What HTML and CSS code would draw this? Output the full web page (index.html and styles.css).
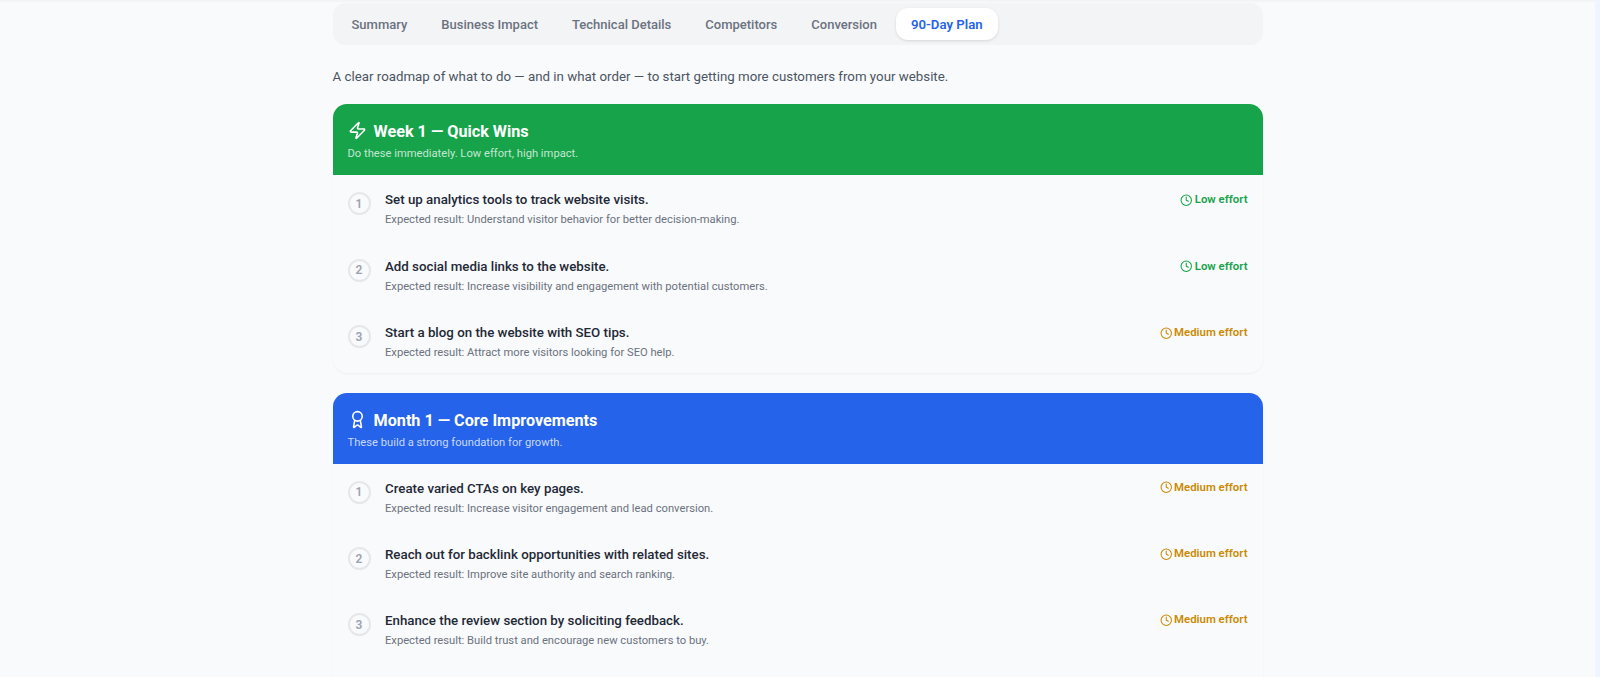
FILE: index.html
```html
<!DOCTYPE html>
<html lang="en">
<head>
<meta charset="utf-8">
<title>90-Day Plan</title>
<link rel="stylesheet" href="styles.css">
</head>
<body>
<svg class="defs" width="0" height="0" aria-hidden="true">
<symbol id="clock" viewBox="0 0 24 24"><circle cx="12" cy="12" r="10"/><path d="M12 6v6l4 2"/></symbol>
</svg>
<div class="page">
<main class="content">
<nav class="tabs">
<span class="tab">Summary</span>
<span class="tab">Business Impact</span>
<span class="tab">Technical Details</span>
<span class="tab">Competitors</span>
<span class="tab">Conversion</span>
<span class="tab active">90-Day Plan</span>
</nav>
<p class="intro">A clear roadmap of what to do — and in what order — to start getting more customers from your website.</p>

<section class="card">
<header class="head green">
<h2 class="head-title"><svg class="head-icon" viewBox="0 0 24 24"><path d="M4 14a1 1 0 0 1-.78-1.63l9.9-10.2a.5.5 0 0 1 .86.46l-1.92 6.02A1 1 0 0 0 13 10h7a1 1 0 0 1 .78 1.63l-9.9 10.2a.5.5 0 0 1-.86-.46l1.92-6.02A1 1 0 0 0 11 14z"/></svg>Week 1 — Quick Wins</h2>
<p class="head-sub">Do these immediately. Low effort, high impact.</p>
</header>
<ol class="items">
<li class="item"><span class="num">1</span><div class="body"><div class="title">Set up analytics tools to track website visits.</div><div class="result">Expected result: Understand visitor behavior for better decision-making.</div></div><span class="effort low"><svg class="clock"><use href="#clock"/></svg>Low effort</span></li>
<li class="item"><span class="num">2</span><div class="body"><div class="title">Add social media links to the website.</div><div class="result">Expected result: Increase visibility and engagement with potential customers.</div></div><span class="effort low"><svg class="clock"><use href="#clock"/></svg>Low effort</span></li>
<li class="item"><span class="num">3</span><div class="body"><div class="title">Start a blog on the website with SEO tips.</div><div class="result">Expected result: Attract more visitors looking for SEO help.</div></div><span class="effort med"><svg class="clock"><use href="#clock"/></svg>Medium effort</span></li>
</ol>
</section>

<section class="card card-open">
<header class="head blue">
<h2 class="head-title"><svg class="head-icon" viewBox="0 0 24 24"><path d="m15.477 12.89 1.515 8.526a.5.5 0 0 1-.81.47l-3.58-2.687a1 1 0 0 0-1.197 0l-3.586 2.686a.5.5 0 0 1-.81-.469l1.514-8.526"/><circle cx="12" cy="8" r="6"/></svg>Month 1 — Core Improvements</h2>
<p class="head-sub">These build a strong foundation for growth.</p>
</header>
<ol class="items">
<li class="item"><span class="num">1</span><div class="body"><div class="title">Create varied CTAs on key pages.</div><div class="result">Expected result: Increase visitor engagement and lead conversion.</div></div><span class="effort med"><svg class="clock"><use href="#clock"/></svg>Medium effort</span></li>
<li class="item"><span class="num">2</span><div class="body"><div class="title">Reach out for backlink opportunities with related sites.</div><div class="result">Expected result: Improve site authority and search ranking.</div></div><span class="effort med"><svg class="clock"><use href="#clock"/></svg>Medium effort</span></li>
<li class="item"><span class="num">3</span><div class="body"><div class="title">Enhance the review section by soliciting feedback.</div><div class="result">Expected result: Build trust and encourage new customers to buy.</div></div><span class="effort med"><svg class="clock"><use href="#clock"/></svg>Medium effort</span></li>
</ol>
</section>
</main>
<div class="rail"></div>
</div>
</body>
</html>
```
FILE: styles.css
```css
* { box-sizing: border-box; }
html, body { margin: 0; height: 677px; overflow: hidden; }
body { font-family: Roboto, "Noto Sans", sans-serif; background: #f9fafb; color: #111827; }
.defs { display: block; height: 0; }
.page { display: flex; height: 677px; overflow: hidden; }
.content { flex: 1; border-top: 2px solid #f3f4f6; padding: 1px 332.5px 0; min-width: 0; }
.rail { width: 5px; background: #eff6ff; }
.tabs { display: flex; gap: 4px; height: 42px; padding: 5px 4px; background: #f3f4f6; border-radius: 12px; }
.tab { display: flex; align-items: center; padding: 0 15px; font-size: 13px; font-weight: 500; color: #6b7280; border-radius: 12px; }
.tab.active { background: #fff; color: #2563eb; font-size: 13.2px; font-weight: 600; box-shadow: 0 1px 3px rgba(0,0,0,.12); }
.intro { margin: 22px 0 17px; font-size: 13.3px; line-height: 20px; color: #4b5563; }
.card { margin-bottom: 20px; border-radius: 14px; overflow: hidden; box-shadow: 0 1px 2px rgba(0,0,0,.05); background: #f9fafb; }
.card-open { padding-bottom: 60px; }
.card-open .item { padding-top: 14.5px; }
.card-open .item:nth-child(3) { padding-top: 14px; }
.card-open .effort { margin-top: 0; }
.head { height: 71px; padding: 16px 15px 0; color: #fff; }
.green { background: #16a34a; }
.blue { background: #2563eb; }
.head-title { display: flex; align-items: center; gap: 7px; margin: 0; font-size: 16.2px; line-height: 24px; font-weight: 700; }
.head-icon { width: 19px; height: 19px; margin-top: -3px; fill: none; stroke: #fff; stroke-width: 2; stroke-linecap: round; stroke-linejoin: round; }
.head-sub { margin: 2px 0 0; font-size: 11.2px; line-height: 16px; color: rgba(255,255,255,.75); }
.items { list-style: none; margin: 0; padding: 0 15px; }
.item { display: flex; align-items: flex-start; gap: 14.5px; height: 66.5px; padding-top: 15px; }
.item:last-child { height: 65px; }
.num { flex: none; display: flex; align-items: center; justify-content: center; width: 23px; height: 23px; margin-top: 2px; border: 2px solid #e5e7eb; border-radius: 50%; font-size: 12px; font-weight: 600; color: #9ca3af; }
.body { flex: 1; min-width: 0; }
.title { font-size: 13.3px; line-height: 20px; font-weight: 500; color: #1f2937; }
.result { margin-top: 2px; font-size: 11.2px; line-height: 16px; color: #6b7280; }
.effort { display: flex; align-items: center; gap: 2px; margin-top: 1px; font-size: 11.4px; line-height: 16px; font-weight: 600; }
.clock { width: 12.5px; height: 12.5px; margin-top: 2px; fill: none; stroke: currentColor; stroke-width: 2; stroke-linecap: round; stroke-linejoin: round; }
.low { color: #16a34a; }
.med { color: #ca8a04; }
```
